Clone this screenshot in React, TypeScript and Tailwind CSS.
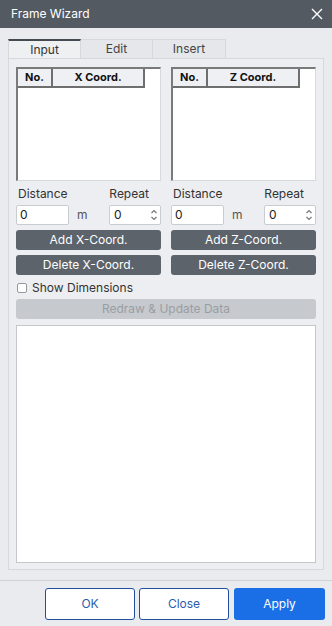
import React from "react";

function CoordTable({ label }: { label: string }) {
  return (
    <div className="h-[114px] w-[145px] bg-white border-t-2 border-l-2 border-[#7a7a7a] border-r border-b border-r-[#d8d9dc] border-b-[#d8d9dc] flex flex-col">
      <div className="flex h-[19px] w-[127px] border-b-2 border-r-2 border-[#6e6e6e]">
        <div className="w-[35px] flex items-center justify-center bg-[#eef0f4] border-r-2 border-[#6e6e6e] text-[11px] font-bold text-[#111]">No.</div>
        <div className="flex-1 flex items-center justify-center bg-[#eef0f4] text-[11px] font-bold text-[#111]">{label}</div>
      </div>
    </div>
  );
}

function Side({ axis }: { axis: string }) {
  return (
    <div className="w-[145px] flex flex-col">
      <CoordTable label={`${axis} Coord.`} />
      <div className="flex justify-between mt-[6px] text-[12px] text-[#333] leading-[14px] px-[2px]">
        <span>Distance</span>
        <span className="mr-[10px]">Repeat</span>
      </div>
      <div className="flex items-center mt-[4px]">
        <div className="w-[53px] h-[20px] bg-white border border-[#c9ccd1] rounded-[2px] flex items-center px-[3px] text-[12px] text-[#222]">0</div>
        <span className="ml-[8px] text-[12px] text-[#555]">m</span>
        <div className="ml-auto w-[52px] h-[20px] bg-white border border-[#c9ccd1] rounded-[2px] flex items-center pl-[4px] pr-[2px] text-[12px] text-[#222]">
          <span className="flex-1">0</span>
          <svg width="8" height="14" viewBox="0 0 8 14" fill="none" stroke="#777" strokeWidth="1.2">
            <path d="M1.5 5 L4 2.5 L6.5 5" />
            <path d="M1.5 9 L4 11.5 L6.5 9" />
          </svg>
        </div>
      </div>
      <button className="mt-[5px] h-[20px] w-full rounded-[3px] bg-[#5d636b] text-white text-[12px] flex items-center justify-center">Add {axis}-Coord.</button>
      <button className="mt-[5px] h-[20px] w-full rounded-[3px] bg-[#5d636b] text-white text-[12px] flex items-center justify-center">Delete {axis}-Coord.</button>
    </div>
  );
}

export default function App() {
  return (
    <div className="w-[332px] h-[626px] bg-[#eaebee] flex flex-col" style={{ fontFamily: "Inter, 'Noto Sans', sans-serif" }}>
      <div className="h-[28px] bg-[#545a62] flex items-center justify-between pl-[11px] pr-[9px] shrink-0">
        <span className="text-white text-[12px]">Frame Wizard</span>
        <svg width="12" height="12" viewBox="0 0 12 12" stroke="white" strokeWidth="1.4">
          <path d="M1 1 L11 11 M11 1 L1 11" />
        </svg>
      </div>
      <div className="flex flex-col px-[8px] pt-[11px] flex-1">
        <div className="flex h-[19px] text-[12px]">
          <div className="w-[73px] border-t-2 border-[#444a52] border-x border-x-[#d6d8dc] bg-[#eff0f2] flex items-center justify-center text-[#333]">Input</div>
          <div className="w-[72px] border-t border-r border-[#d6d8dc] bg-[#e6e7ea] flex items-center justify-center text-[#444]">Edit</div>
          <div className="w-[73px] border-t border-r border-[#d6d8dc] bg-[#e6e7ea] flex items-center justify-center text-[#444]">Insert</div>
        </div>
        <div className="h-[512px] border border-[#d6d8dc] bg-[#eceef1] px-[7px] pt-[8px] flex flex-col">
          <div className="flex justify-between">
            <Side axis="X" />
            <Side axis="Z" />
          </div>
          <label className="flex items-center mt-[6px] text-[12px] text-[#333] h-[14px]">
            <span className="w-[10px] h-[10px] bg-white border border-[#999] rounded-[2px] mx-[1px]"></span>
            <span className="ml-[4px]">Show Dimensions</span>
          </label>
          <button className="mt-[4px] h-[20px] w-full rounded-[3px] bg-[#c6c9cd] text-[#9a9ea4] text-[12px] flex items-center justify-center">Redraw &amp; Update Data</button>
          <div className="mt-[6px] h-[238px] bg-white border border-[#c4c7cc]"></div>
        </div>
        <div className="mt-[10px] -mx-[8px] border-t border-[#cfd1d5] flex justify-end gap-[4px] pt-[7px] pr-[7px]">
          <button className="w-[90px] h-[32px] bg-white border border-[#1f4f9c] rounded-[3px] text-[#2a5db0] text-[12px]">OK</button>
          <button className="w-[90px] h-[32px] bg-white border border-[#1f4f9c] rounded-[3px] text-[#2a5db0] text-[12px]">Close</button>
          <button className="w-[91px] h-[32px] bg-[#1a6fe6] rounded-[3px] text-white text-[12px] ml-[1px]">Apply</button>
        </div>
      </div>
    </div>
  );
}
